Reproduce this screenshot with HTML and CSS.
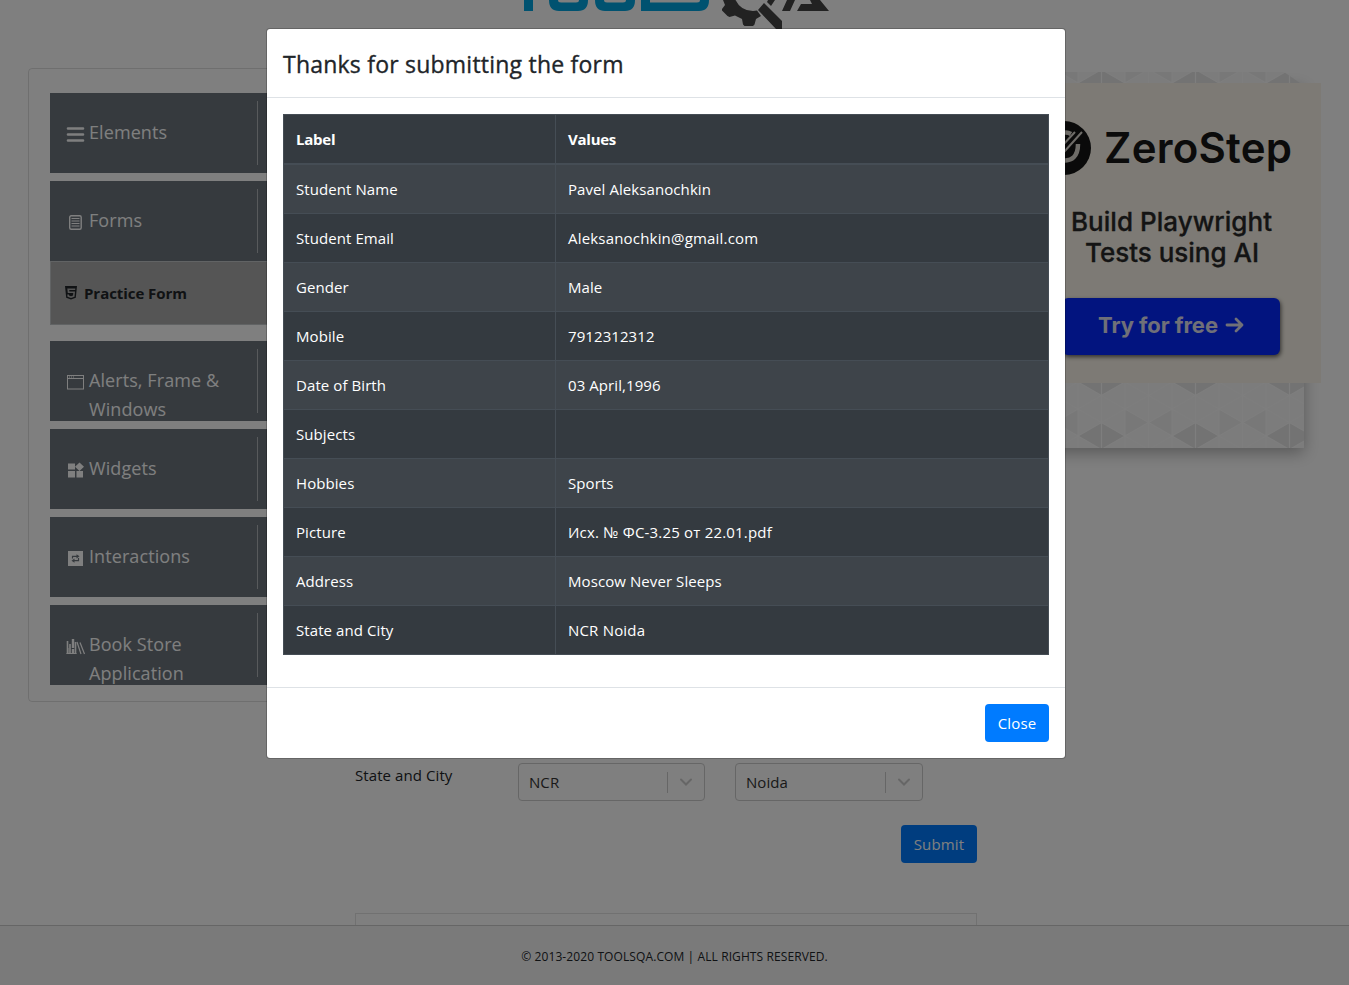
FILE: index.html
```html
<!DOCTYPE html>
<html lang="en">
<head>
<meta charset="utf-8">
<title>ToolsQA</title>
<link rel="stylesheet" href="styles.css">
</head>
<body>
<div class="page">
  <header class="header">
    <svg class="logo" width="320" height="30" viewBox="0 0 320 30">
      <g fill="#00a5e0">
        <path d="M8 0h9v11H8z"/>
        <path d="M33 0h9q0 2.500 3 2.500h15q3 0 3-2.500h9q0 11-10 11H43Q33 11 33 0z"/>
        <path d="M79 0h9q0 2.500 3 2.500h16q3 0 3-2.500h9q0 11-10 11H89Q79 11 79 0z"/>
        <path d="M125 0h9v2.500h47q3 0 3-2.500h9q0 11-10 11h-58z"/>
      </g>
      <g fill="#454545">
        <path d="M207 0H219.500Q225 11 237 11L241 10.500L245 16L240 19L238.500 24.500L237 26H228.500L227 24.500L226 19L219 15.500L213.500 17L211.500 16L206 10.500V9L209 5z"/>
        <path d="M248 3l18 18v8h-6L242 10zM252 0h7l-4 6-4-4zM271 0h8l-5 11h-8zM281 11l4-7h11l-2-4h10l9 11z"/>
      </g>
    </svg>
  </header>
  <main class="columns">
    <nav class="sidebar">
      <div class="item"><svg class="icon" width="20" height="20" viewBox="0 0 20 20"><path d="M2 4.500h15M2 10.500h15M2 16.500h15" stroke="currentColor" stroke-width="2.600" stroke-linecap="round"/></svg><span class="name">Elements</span><i class="rule"></i></div>
      <div class="item opened"><svg class="icon" width="20" height="20" viewBox="0 0 20 20"><rect x="3.700" y="3.800" width="11.500" height="13.500" rx="1.500" fill="none" stroke="currentColor" stroke-width="1.400"/><path d="M5.500 6.500h8M5.500 9h8M5.500 11.500h8M5.500 14h8" stroke="currentColor" stroke-width="1.100"/></svg><span class="name">Forms</span><i class="rule"></i></div>
      <div class="submenu"><svg width="14" height="16" viewBox="0 0 14 16"><path fill="#212529" fill-rule="evenodd" d="M1 1h12l-1.200 11.800L7 14.500l-4.800-1.700zM3.300 3.500l.5 4.500h5.500l-.3 2.500-2 .7-2-.7-.1-1H3.300l.2 2.200L7 13l3.500-1.300.5-5.200H5.400l-.2-1.500h6l.1-1.500z"/></svg><span class="subname">Practice Form</span></div>
      <div class="item"><svg class="icon" width="20" height="20" viewBox="0 0 20 20"><rect x="1.500" y="3.500" width="16" height="13.500" fill="none" stroke="currentColor"/><path d="M2 6.500h15.500" stroke="currentColor"/><path d="M3 5h1M5 5h1M7 5h1" stroke="currentColor"/></svg><span class="name">Alerts, Frame &amp;<br>Windows</span><i class="rule"></i></div>
      <div class="item"><svg class="icon" width="20" height="20" viewBox="0 0 20 20" fill="currentColor"><path d="M2 3.500h7v6H2zM2 11h7v6.500H2zM10.500 11H17v6.500h-6.500zM13.500 2.500l4.500 4.300-4.500 4.300L9 6.800z"/></svg><span class="name">Widgets</span><i class="rule"></i></div>
      <div class="item"><svg class="icon" width="20" height="20" viewBox="0 0 20 20"><path fill="currentColor" d="M2 3h15v15H2z"/><path d="M6.500 10.500V8.300H11M12.500 10v2.700H8" fill="none" stroke="#6c757d" stroke-width="1.200"/><path fill="#6c757d" d="M10.500 6.200l3 2.100-3 2.100zM8.500 10.600l-3 2.100 3 2.100z"/></svg><span class="name">Interactions</span><i class="rule"></i></div>
      <div class="item"><svg class="icon" width="20" height="20" viewBox="0 0 20 20" fill="none" stroke="currentColor"><path d="M1.500 5v13M4 8v10M9.500 6v12" stroke-width="1.600"/><path d="M7 3v15" stroke-width="2.400" stroke-dasharray="9 1"/><path d="M.5 17.500h10M2 12v5" /><path d="M11 6l4 12M14 6.500L18.500 18" stroke-width="1.200"/></svg><span class="name">Book Store<br>Application</span><i class="rule"></i></div>
    </nav>
    <section class="form">
      <div class="row">
        <label class="label">State and City</label>
        <div class="select"><span class="value">NCR</span><i class="separator"></i><svg class="chevron" width="14" height="10" viewBox="0 0 14 10"><path d="M2 2.500l5 5 5-5" fill="none" stroke="#ccc" stroke-width="2" stroke-linecap="round"/></svg></div>
        <div class="select city"><span class="value">Noida</span><i class="separator"></i><svg class="chevron" width="14" height="10" viewBox="0 0 14 10"><path d="M2 2.500l5 5 5-5" fill="none" stroke="#ccc" stroke-width="2" stroke-linecap="round"/></svg></div>
      </div>
      <div class="actions"><button class="button submit">Submit</button></div>
      <div class="banner"></div>
    </section>
    <aside class="promo">
      <svg class="ad" width="345" height="410" viewBox="0 0 345 410">
        <defs>
          <g id="mesh">
            <path fill="#f8f8f8" d="M0 0h94v54H0z"/>
            <path fill="#f0f0f0" d="M47 0l23.500 13.500L47 27zM94 0v27L70.500 13.500z"/>
            <path fill="#e6e6e6" d="M0 27l23.500-13.500L47 27 23.500 40.500z"/>
            <path stroke="#fcfcfc" stroke-width="1.200" fill="none" d="M0 0v54M23.500 0v54M47 0v54M70.500 0v54M94 0v54M0 0l94 54M0 54L94 0M0 27L47 0l47 27-47 27z"/>
          </g>
          <pattern id="tri-top" x="74" y="-12" width="94" height="54" patternUnits="userSpaceOnUse"><use href="#mesh"/></pattern>
          <pattern id="tri" x="74" y="341" width="94" height="54" patternUnits="userSpaceOnUse"><use href="#mesh"/></pattern>
        </defs>
        <path class="card" fill="#f8f8f8" d="M0 15h300v365H0z"/>
        <path fill="url(#tri-top)" d="M0 4h280l16 11H0z"/>
        <path fill="url(#tri)" d="M0 315h300v65H0z"/>
        <path fill="#faf5ea" d="M17 15h300v300H17z"/>
        <circle cx="60" cy="80" r="27" fill="#141414"/>
        <path d="M58 92c10 2 16-4 16-16M56 66q6-3 11 0" fill="none" stroke="#ddd8d0" stroke-width="4.500"/>
        <path d="M60 84l18-20M57 79l14-15" stroke="#ddd8d0" stroke-width="2"/>
        <text x="100" y="95" font-size="42" font-weight="600" fill="#161616" textLength="188">ZeroStep</text>
        <text x="67" y="162.500" font-size="26" font-weight="500" fill="#282828" stroke="#282828" stroke-width=".3" textLength="201">Build Playwright</text>
        <text x="81" y="194" font-size="26" font-weight="500" fill="#282828" stroke="#282828" stroke-width=".3" textLength="174">Tests using AI</text>
        <rect class="cta" x="58" y="230" width="218" height="57" rx="6" fill="#0428ff"/>
        <text x="94" y="265" font-size="22" font-weight="700" fill="#e0e0f0" textLength="120">Try for free</text>
        <path d="M223 257h15M232 251l6 6-6 6" fill="none" stroke="#e0e0f0" stroke-width="2.800" stroke-linecap="round" stroke-linejoin="round"/>
      </svg>
    </aside>
  </main>
  <footer class="footer"><span>© 2013-2020 TOOLSQA.COM | ALL RIGHTS RESERVED.</span></footer>
</div>
<div class="overlay">
  <div class="modal">
    <div class="modal-header"><span class="modal-title">Thanks for submitting the form</span></div>
    <div class="modal-body">
      <table class="table">
        <thead><tr><th class="key">Label</th><th>Values</th></tr></thead>
        <tbody>
          <tr><td>Student Name</td><td>Pavel Aleksanochkin</td></tr>
          <tr><td>Student Email</td><td class="wide">Aleksanochkin@gmail.com</td></tr>
          <tr><td>Gender</td><td>Male</td></tr>
          <tr><td>Mobile</td><td>7912312312</td></tr>
          <tr><td>Date of Birth</td><td>03 April,1996</td></tr>
          <tr><td>Subjects</td><td></td></tr>
          <tr><td>Hobbies</td><td>Sports</td></tr>
          <tr><td>Picture</td><td class="wide">Исх. № ФС-3.25 от 22.01.pdf</td></tr>
          <tr><td>Address</td><td>Moscow Never Sleeps</td></tr>
          <tr><td>State and City</td><td class="wide">NCR Noida</td></tr>
        </tbody>
      </table>
    </div>
    <div class="modal-footer"><button class="button">Close</button></div>
  </div>
</div>
</body>
</html>
```
FILE: styles.css
```css
* { box-sizing: border-box; }
body {
  margin: 0;
  font: 15px/24px "Open Sans", "Noto Sans", sans-serif;
  letter-spacing: 0.08px;
  color: #212529;
  background: #fff;
}
.page { height: 985px; display: flex; flex-direction: column; overflow: hidden; }
.header { height: 68px; flex: none; padding-left: 516px; }
.logo { display: block; }
.columns {
  flex: 1;
  min-height: 0;
  overflow: hidden;
  display: grid;
  grid-template-columns: 281px 622px 345px;
  column-gap: 46px;
  padding-left: 28px;
  align-items: start;
}
.sidebar {
  height: 634px;
  padding: 24px 0 0 21px;
  border: 1px solid rgba(0, 0, 0, 0.125);
  border-radius: 4px;
}
.item {
  height: 80px;
  margin-bottom: 8px;
  padding: 8px 0 0 16px;
  display: flex;
  overflow: hidden;
  background: #6c757d;
  color: #fff;
  font-size: 18px;
  line-height: 29px;
  letter-spacing: 0.08px;
}
.opened { margin-bottom: 0; }
.icon { flex: none; margin-top: 23px; }
.name { width: 171px; padding: 17px 0 0 3px; flex: none; white-space: nowrap; }
.rule { width: 1px; height: 64px; background: #b0b4b8; }
.submenu {
  height: 64px;
  margin-bottom: 16px;
  padding-left: 13px;
  display: flex;
  align-items: center;
  gap: 6px;
  background: #aaa;
  border: 1px solid #c3c6c8;
  font-weight: 700;
}
.subname { letter-spacing: -0.05px; }
.form { padding-top: 695px; }
.row { display: flex; }
.label { width: 163px; }
.select {
  width: 187px;
  height: 38px;
  padding: 0 11px 0 10px;
  display: flex;
  align-items: center;
  border: 1px solid #ccc;
  border-radius: 4px;
}
.city { width: 188px; margin-left: 30px; }
.value { flex: 1; color: #333; }
.separator { width: 1px; height: 21px; margin-right: 11px; background: #ccc; }
.chevron { flex: none; }
.actions { display: flex; justify-content: flex-end; margin-top: 24px; }
.button {
  width: 64px;
  height: 38px;
  padding: 0;
  border: 0;
  border-radius: 4px;
  background: #007bff;
  color: #fff;
  font: inherit;
  letter-spacing: 0.15px;
}
.submit { width: 76px; }
.banner { height: 90px; margin-top: 50px; border: 1px solid #e3e3e3; }
.promo { margin-left: -19px; }
.ad { display: block; overflow: visible; font-family: Inter, sans-serif; letter-spacing: 0; }
.card { filter: drop-shadow(0 5px 8px rgba(0, 0, 0, 0.3)); }
.cta { filter: drop-shadow(1px 2px 2px rgba(0, 0, 0, 0.6)); }
.footer {
  height: 60px;
  flex: none;
  display: flex;
  justify-content: center;
  padding: 19px 0 0;
  background: #f5f5f5;
  border-top: 1px solid #ccc;
  font-size: 12px;
  letter-spacing: 0.1px;
}
.overlay {
  position: absolute;
  inset: 0;
  padding: 28px 0 0 266px;
  background: rgba(0, 0, 0, 0.5);
}
.modal {
  width: 800px;
  background: #fff;
  background-clip: padding-box;
  border: 1px solid rgba(0, 0, 0, 0.2);
  border-radius: 4px;
}
.modal-header { height: 69px; padding: 17px 16px 0; border-bottom: 1px solid #dee2e6; }
.modal-title {
  display: block;
  font-size: 23px;
  line-height: 36px;
  letter-spacing: 0.22px;
  -webkit-text-stroke: 0.35px currentColor;
}
.modal-body { padding: 16px; }
.table {
  width: 766px;
  margin-bottom: 16px;
  border-collapse: collapse;
  table-layout: fixed;
  background: #343a40;
  color: #fff;
  border: 1px solid #454d55;
}
.table th, .table td {
  height: 49px;
  padding: 12px;
  border: 1px solid #454d55;
  text-align: left;
}
.table th { border-bottom-width: 2px; font-weight: 700; letter-spacing: -0.25px; }
.table .key { width: 272px; }
.table .wide { letter-spacing: 0.19px; }
.table tbody tr:nth-child(odd) { background: #3e444a; }
.modal-footer {
  display: flex;
  justify-content: flex-end;
  padding: 16px;
  border-top: 1px solid #dee2e6;
}
```
